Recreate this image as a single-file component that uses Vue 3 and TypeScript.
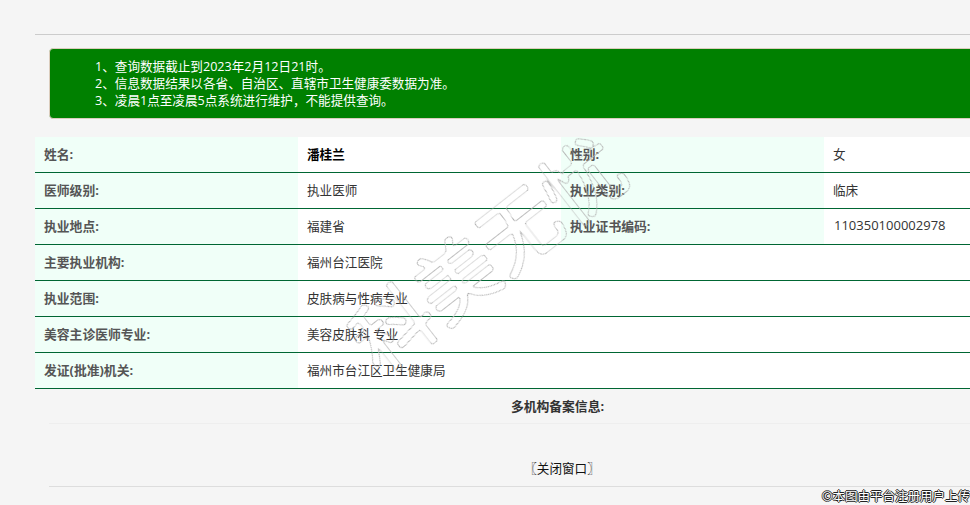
<script setup lang="ts">
interface Row {
  label: string
  value: string
  label2?: string
  value2?: string
  strong?: boolean
  wide?: boolean
}

const notices: string[] = [
  '1、查询数据截止到2023年2月12日21时。',
  '2、信息数据结果以各省、自治区、直辖市卫生健康委数据为准。',
  '3、凌晨1点至凌晨5点系统进行维护，不能提供查询。',
]

const rows: Row[] = [
  { label: '姓名:', value: '潘桂兰', label2: '性别:', value2: '女', strong: true },
  { label: '医师级别:', value: '执业医师', label2: '执业类别:', value2: '临床' },
  { label: '执业地点:', value: '福建省', label2: '执业证书编码:', value2: '110350100002978', wide: true },
  { label: '主要执业机构:', value: '福州台江医院' },
  { label: '执业范围:', value: '皮肤病与性病专业' },
  { label: '美容主诊医师专业:', value: '美容皮肤科 专业' },
  { label: '发证(批准)机关:', value: '福州市台江区卫生健康局' },
]
</script>

<template>
  <div class="page">
    <svg class="defs" width="0" height="0" aria-hidden="true">
      <filter id="stamp-outline" x="-10%" y="-20%" width="120%" height="140%" color-interpolation-filters="sRGB">
        <feGaussianBlur in="SourceAlpha" stdDeviation="1.6" result="blurred" />
        <feComponentTransfer in="blurred" result="outer">
          <feFuncA type="linear" slope="7" intercept="-1" />
        </feComponentTransfer>
        <feComponentTransfer in="blurred" result="inner">
          <feFuncA type="linear" slope="7" intercept="-2" />
        </feComponentTransfer>
        <feComposite in="outer" in2="inner" operator="out" result="ring" />
        <feFlood flood-color="#b0b0b0" />
        <feComposite in2="ring" operator="in" />
      </filter>
    </svg>
    <div class="content">
      <hr class="top-rule" />
      <div class="notice">
        <div v-for="n in notices" :key="n">{{ n }}</div>
      </div>
      <table class="info">
        <colgroup>
          <col class="col" /><col class="col" /><col class="col" /><col class="col" />
        </colgroup>
        <tbody>
          <tr v-for="r in rows" :key="r.label">
            <th>{{ r.label }}</th>
            <td :class="{ strong: r.strong }" :colspan="r.label2 ? 1 : 3">{{ r.value }}</td>
            <template v-if="r.label2">
              <th>{{ r.label2 }}</th>
              <td :class="{ code: r.wide }">{{ r.value2 }}</td>
            </template>
          </tr>
        </tbody>
      </table>
      <div class="lower">
        <div class="multi">多机构备案信息:</div>
        <div class="close">〖关闭窗口〗</div>
      </div>
    </div>
    <div class="stamp" aria-hidden="true">科美无忧</div>
    <div class="credit">©本图由平台注册用户上传</div>
  </div>
</template>

<style>
html,
body {
  margin: 0;
  background: #f5f5f5;
  overflow: hidden;
}
</style>

<style scoped>
.page {
  position: relative;
  width: 970px;
  height: 505px;
  overflow: hidden;
  background: #f5f5f5;
  font-family: "Open Sans", "Noto Sans CJK SC", sans-serif;
  font-size: 12.6px;
  color: #333;
}
.defs {
  position: absolute;
}
.content {
  box-sizing: border-box;
  width: 1087px;
  padding: 34px 0 0 35px;
}
.top-rule {
  margin: 0;
  border: 0;
  border-top: 1px solid #ccc;
}
.notice {
  box-sizing: border-box;
  height: 71px;
  margin: 13px 0 18px 14px;
  padding: 9px 0 0 45px;
  background: #008000;
  border: 1px solid #dbcdbd;
  border-radius: 4px;
  color: #fff;
  line-height: 17px;
}
.info {
  width: 1052px;
  table-layout: fixed;
  border-collapse: separate;
  border-spacing: 0;
  background: #fff;
}
.col {
  width: 25%;
}
.info th,
.info td {
  box-sizing: border-box;
  height: 36px;
  padding: 0 9px 3px;
  text-align: left;
  border-bottom: 1px solid #006633;
}
.info th {
  background: #f0fff8;
  color: #555;
  font-size: 12.8px;
  font-weight: 700;
}
.info td {
  font-weight: 400;
}
.info td.strong {
  color: #000;
  font-weight: 700;
}
.info td.code {
  font-size: 13px;
  padding-left: 10px;
}
.lower {
  margin-left: 14px;
  width: 1024px;
}
.multi {
  height: 35px;
  line-height: 34px;
  border-bottom: 1px solid #eee;
  box-sizing: border-box;
  text-align: center;
  font-size: 12.8px;
  font-weight: 700;
  padding-right: 7px;
}
.close {
  height: 63px;
  line-height: 20px;
  padding: 35px 0 0 2px;
  box-sizing: border-box;
  border-bottom: 1px solid #ddd;
  text-align: center;
  color: #111;
}
.stamp {
  position: absolute;
  left: 327px;
  top: 213px;
  width: 320px;
  text-align: center;
  font-size: 80px;
  line-height: 80px;
  white-space: nowrap;
  color: #000;
  filter: url(#stamp-outline);
  transform: rotate(-38deg);
}
.credit {
  position: absolute;
  right: 0;
  bottom: 0;
  line-height: 17px;
  font-size: 12.5px;
  color: #fff;
  white-space: nowrap;
  text-shadow: 1px 0 0 #222, -1px 0 0 #222, 0 1px 0 #222, 0 -1px 0 #222;
}
</style>
